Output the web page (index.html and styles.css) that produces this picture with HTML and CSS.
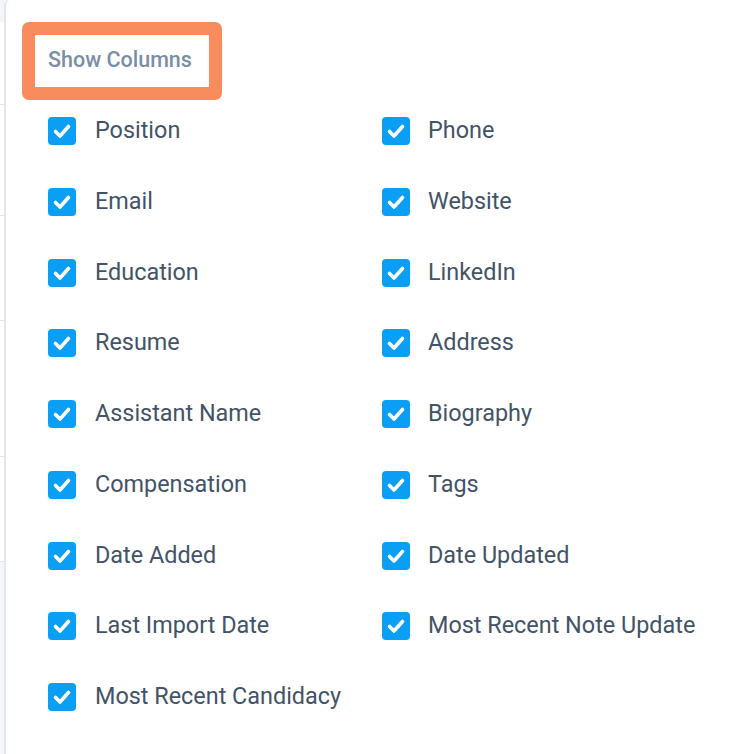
FILE: index.html
```html
<!DOCTYPE html>
<html>
<head>
<meta charset="utf-8">
<link rel="stylesheet" href="styles.css">
</head>
<body>
<div class="page">
  <div class="behind">
    <div class="behind-row r1"></div>
    <div class="behind-row r2"></div>
    <div class="behind-row r3"></div>
    <div class="behind-row r4"></div>
    <div class="behind-row r5"></div>
    <div class="behind-row r6"></div>
  </div>
  <div class="panel">
    <div class="title-wrap">
      <div class="title">Show Columns</div>
    </div>
    <div class="grid">
      <label class="item"><span class="box"><svg viewBox="0 0 28 28"><path d="M7.5 14.5 L12 19 L20.5 9.5"/></svg></span><span class="lbl">Position</span></label>
      <label class="item"><span class="box"><svg viewBox="0 0 28 28"><path d="M7.5 14.5 L12 19 L20.5 9.5"/></svg></span><span class="lbl">Phone</span></label>
      <label class="item"><span class="box"><svg viewBox="0 0 28 28"><path d="M7.5 14.5 L12 19 L20.5 9.5"/></svg></span><span class="lbl">Email</span></label>
      <label class="item"><span class="box"><svg viewBox="0 0 28 28"><path d="M7.5 14.5 L12 19 L20.5 9.5"/></svg></span><span class="lbl">Website</span></label>
      <label class="item"><span class="box"><svg viewBox="0 0 28 28"><path d="M7.5 14.5 L12 19 L20.5 9.5"/></svg></span><span class="lbl">Education</span></label>
      <label class="item"><span class="box"><svg viewBox="0 0 28 28"><path d="M7.5 14.5 L12 19 L20.5 9.5"/></svg></span><span class="lbl">LinkedIn</span></label>
      <label class="item"><span class="box"><svg viewBox="0 0 28 28"><path d="M7.5 14.5 L12 19 L20.5 9.5"/></svg></span><span class="lbl">Resume</span></label>
      <label class="item"><span class="box"><svg viewBox="0 0 28 28"><path d="M7.5 14.5 L12 19 L20.5 9.5"/></svg></span><span class="lbl">Address</span></label>
      <label class="item"><span class="box"><svg viewBox="0 0 28 28"><path d="M7.5 14.5 L12 19 L20.5 9.5"/></svg></span><span class="lbl">Assistant Name</span></label>
      <label class="item"><span class="box"><svg viewBox="0 0 28 28"><path d="M7.5 14.5 L12 19 L20.5 9.5"/></svg></span><span class="lbl">Biography</span></label>
      <label class="item"><span class="box"><svg viewBox="0 0 28 28"><path d="M7.5 14.5 L12 19 L20.5 9.5"/></svg></span><span class="lbl">Compensation</span></label>
      <label class="item"><span class="box"><svg viewBox="0 0 28 28"><path d="M7.5 14.5 L12 19 L20.5 9.5"/></svg></span><span class="lbl">Tags</span></label>
      <label class="item"><span class="box"><svg viewBox="0 0 28 28"><path d="M7.5 14.5 L12 19 L20.5 9.5"/></svg></span><span class="lbl">Date Added</span></label>
      <label class="item"><span class="box"><svg viewBox="0 0 28 28"><path d="M7.5 14.5 L12 19 L20.5 9.5"/></svg></span><span class="lbl">Date Updated</span></label>
      <label class="item"><span class="box"><svg viewBox="0 0 28 28"><path d="M7.5 14.5 L12 19 L20.5 9.5"/></svg></span><span class="lbl">Last Import Date</span></label>
      <label class="item"><span class="box"><svg viewBox="0 0 28 28"><path d="M7.5 14.5 L12 19 L20.5 9.5"/></svg></span><span class="lbl">Most Recent Note Update</span></label>
      <label class="item"><span class="box"><svg viewBox="0 0 28 28"><path d="M7.5 14.5 L12 19 L20.5 9.5"/></svg></span><span class="lbl">Most Recent Candidacy</span></label>
    </div>
  </div>
</div>
</body>
</html>
```

FILE: styles.css
```css
html, body {
  margin: 0;
  padding: 0;
  background: #f4f6f9;
}
.page {
  display: flex;
  width: 756px;
  height: 754px;
  overflow: hidden;
  font-family: Roboto, "Liberation Sans", sans-serif;
}
.behind {
  width: 4px;
  flex: none;
  display: flex;
  flex-direction: column;
}
.behind-row {
  border-bottom: 1px solid #e3e6ea;
  background: #ffffff;
}
.behind-row.r1 { height: 22px; background: #f4f6f9; border-bottom: none; }
.behind-row.r2 { height: 82px; }
.behind-row.r3 { height: 110px; }
.behind-row.r4 { height: 104px; }
.behind-row.r5 { height: 135px; }
.behind-row.r6 { height: 104px; }
.panel {
  flex: 1;
  background: #ffffff;
  border-left: 2px solid #e3e6ea;
  border-top-left-radius: 6px;
  box-sizing: border-box;
  padding: 22px 0 0 16px;
}
.title-wrap {
  display: inline-block;
  border: 13px solid #f98c5c;
  border-radius: 7px;
  width: 200px;
  height: 78px;
  box-sizing: border-box;
}
.title {
  padding: 10px 0 0 13px;
  font-size: 21.5px;
  font-weight: 500;
  color: #7a8ea5;
  line-height: 30px;
}
.grid {
  display: grid;
  grid-template-columns: 334px 1fr;
  grid-auto-rows: 70.75px;
  padding: 17px 0 0 26px;
}
.item {
  display: flex;
  align-items: flex-start;
}
.box {
  width: 28px;
  height: 28px;
  border-radius: 4px;
  background: #0a9ff5;
  flex: none;
  display: block;
}
.box svg {
  width: 28px;
  height: 28px;
  display: block;
  fill: none;
  stroke: #ffffff;
  stroke-width: 3.6;
  stroke-linecap: round;
  stroke-linejoin: round;
}
.lbl {
  margin-left: 19px;
  font-size: 23.4px;
  color: #435367;
  line-height: 28px;
  margin-top: -1px;
  white-space: nowrap;
}
.item:nth-child(even) .lbl {
  margin-left: 18px;
}
```
